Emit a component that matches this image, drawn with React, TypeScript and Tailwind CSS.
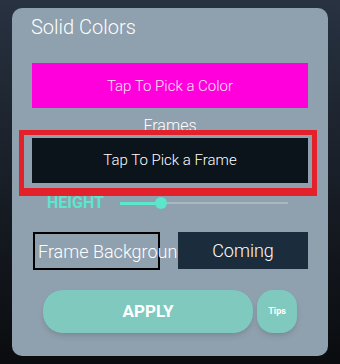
export default function App() {
  return (
    <div
      className="w-[340px] h-[364px] pt-[8px] px-[12px] bg-gradient-to-b from-[#283241] to-[#0a0c0f]"
      style={{ fontFamily: "Roboto, 'Liberation Sans', sans-serif" }}
    >
      <div className="w-[316px] h-[348px] rounded-[10px] bg-[#8fa0ae] flex flex-col">
        {/* Title */}
        <div className="pt-[7px] pl-[19px] text-[20px] leading-[24px] font-light text-white">Solid Colors</div>

        {/* Color picker */}
        <button className="mt-[24px] mx-[20px] h-[45px] pt-[2px] bg-[#ff00dd] text-[#fbe6f8] text-[15px] font-light">
          Tap To Pick a Color
        </button>

        <div className="mt-[8px] text-center text-[16px] leading-[20px] font-light text-white">Frames</div>

        {/* Frame picker (highlighted) */}
        <div className="relative -mt-[6px] ml-[7px] w-[298px] border-[5px] border-b-[8px] border-[#e3212b] pt-[3px] pb-[5px] pl-[8px] pr-[4px]">
          <button className="w-full h-[45px] bg-[#0b131b] text-white text-[15px] font-light">Tap To Pick a Frame</button>
        </div>

        {/* Height slider */}
        <div className="flex items-center h-[14px] ml-[35px]">
          <span className="text-[16px] font-bold text-[#5ce6cc] leading-none">HEIGHT</span>
          <div className="relative ml-[16px] w-[168px] h-[2px] bg-[#aab7c2]">
            <div className="absolute left-0 top-[-0.5px] h-[3px] w-[41px] bg-[#5ce6cc]" />
            <div className="absolute left-[35px] top-[-5px] w-[12px] h-[12px] rounded-full bg-[#5ce6cc]" />
          </div>
        </div>

        {/* Background / Coming */}
        <div className="flex mt-[22px] ml-[21px]">
          <div className="w-[145px] h-[38px] overflow-hidden">
            <div className="w-[127px] h-[38px] border-2 border-black flex items-center pl-[3px] whitespace-nowrap text-white text-[18px] font-light">
              Frame Background
            </div>
          </div>
          <div className="w-[130px] h-[37px] bg-[#1b2d3d] flex items-center justify-center text-white text-[18px] font-light">
            Coming
          </div>
        </div>

        {/* Actions */}
        <div className="flex mt-[20px] ml-[31px] gap-[4px]">
          <button className="w-[210px] h-[43px] rounded-[20px] bg-[#7fc9bf] text-white text-[17px] font-bold shadow-md">
            APPLY
          </button>
          <button className="w-[40px] h-[43px] rounded-[16px] bg-[#7fc9bf] text-white text-[9px] font-bold shadow-md">
            Tips
          </button>
        </div>
      </div>
    </div>
  )
}
